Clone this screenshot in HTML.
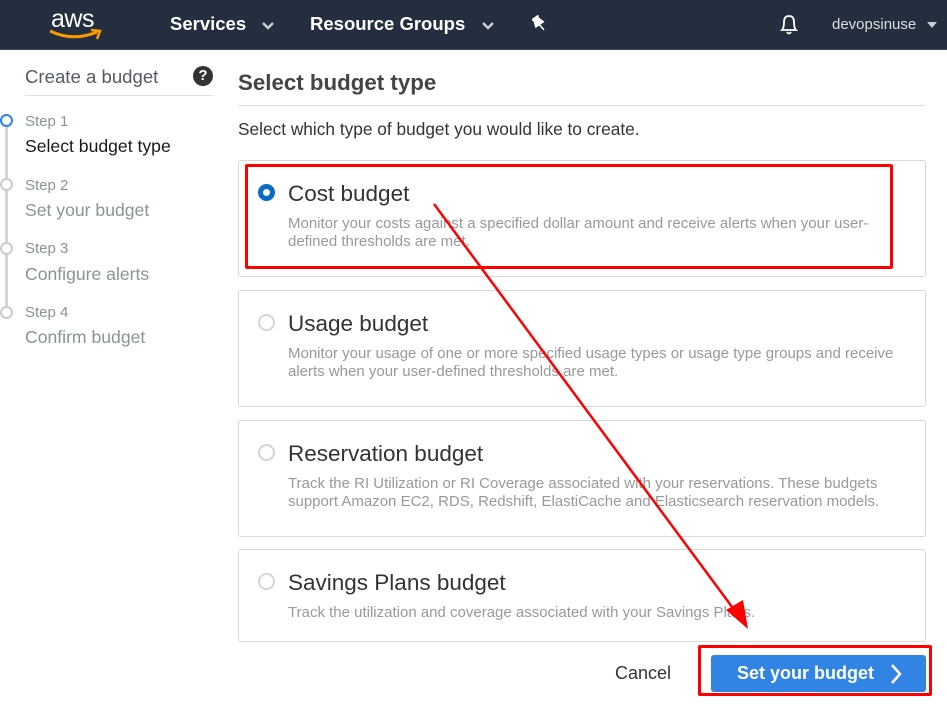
<!DOCTYPE html>
<html><head><style>
*{margin:0;padding:0;box-sizing:border-box}
body{width:947px;height:712px;position:relative;background:#fff;font-family:"Liberation Sans",Arial,sans-serif;overflow:hidden}
.hdr{position:absolute;left:0;top:0;width:947px;height:50px;background:#232f3e;border-bottom:1px solid #3c4a5c}
.hdr .t{position:absolute;top:13px;color:#fff;font-weight:bold;font-size:18.5px}
.a{position:absolute;font-size:16px}
.card{position:absolute;left:238px;width:688px;border:1px solid #d5dbdb;border-radius:3px}
.card .r{position:absolute;left:19px;top:23px;width:17px;height:17px;border:2px solid #d5d5d5;border-radius:50%}
.card .h{position:absolute;left:49px;top:20px;font-size:22.5px;color:#333}
.card .d{position:absolute;left:49px;top:54px;width:612px;font-size:15px;line-height:18px;color:#999}
.step{position:absolute;left:25px;color:#879596;font-size:15px}
.stepn{position:absolute;left:25px;font-size:17.6px;color:#879596}
.dot{position:absolute;left:0;width:13px;height:13px;border:2px solid #ccc;border-radius:50%;background:#fff}
</style></head><body>
<div class="hdr">
<div style="position:absolute;left:51px;top:5px;color:#fff;font-size:25px;letter-spacing:-0.5px">aws</div>
<svg style="position:absolute;left:47px;top:27px" width="56" height="16"><path d="M3 4 Q26 15 50 5" stroke="#f90" stroke-width="3" fill="none"/><path d="M44 3 L53 4 L50 12" stroke="#f90" stroke-width="2.5" fill="none"/></svg>
<div class="t" style="left:170px">Services</div>
<svg style="position:absolute;left:262px;top:22px" width="12" height="8"><path d="M1 1 L6 6 L11 1" stroke="#ccc" stroke-width="2.5" fill="none"/></svg>
<div class="t" style="left:310px">Resource Groups</div>
<svg style="position:absolute;left:482px;top:22px" width="12" height="8"><path d="M1 1 L6 6 L11 1" stroke="#ccc" stroke-width="2.5" fill="none"/></svg>
<svg style="position:absolute;left:532px;top:15px" width="16" height="18"><path d="M4 1 L11 1 L10 3 L12 9 L3 9 L5 3 Z M7 9 L8 16" fill="#fff" stroke="#fff" stroke-width="1.5" transform="rotate(-35 8 9)"/></svg>
<svg style="position:absolute;left:778px;top:13px" width="22" height="24"><path d="M4 17 Q6 15 6 9 Q6 3 11 3 Q16 3 16 9 Q16 15 18 17 Z M9 19 Q11 22 13 19" stroke="#fff" stroke-width="1.8" fill="none"/></svg>
<div style="position:absolute;left:832px;top:16px;color:#ddd;font-size:15px">devopsinuse</div>
<svg style="position:absolute;left:927px;top:22px" width="10" height="6"><path d="M0 0 L10 0 L5 6Z" fill="#ccc"/></svg>
</div>

<div style="position:absolute;left:25px;top:66px;font-size:18.6px;color:#545b64">Create a budget</div>
<div style="position:absolute;left:193px;top:66px;width:20px;height:20px;border-radius:50%;background:#333;color:#fff;font-weight:bold;font-size:15px;text-align:center;line-height:20px">?</div>
<div style="position:absolute;left:25px;top:95px;width:188px;height:1px;background:#e0e0e0"></div>
<div style="position:absolute;left:5px;top:120px;width:3px;height:192px;background:#d5d5d5"></div>
<div class="dot" style="top:114px;border-color:#3184e4"></div>
<div class="dot" style="top:178px"></div>
<div class="dot" style="top:242px"></div>
<div class="dot" style="top:306px"></div>
<div class="step" style="top:113px">Step 1</div><div class="stepn" style="top:136px;color:#16191f">Select budget type</div>
<div class="step" style="top:177px">Step 2</div><div class="stepn" style="top:200px">Set your budget</div>
<div class="step" style="top:240px">Step 3</div><div class="stepn" style="top:264px">Configure alerts</div>
<div class="step" style="top:304px">Step 4</div><div class="stepn" style="top:327px">Confirm budget</div>

<div style="position:absolute;left:238px;top:70px;font-size:22.3px;font-weight:bold;color:#444">Select budget type</div>
<div style="position:absolute;left:238px;top:105px;width:688px;height:1px;background:#e0e0e0"></div>
<div class="a" style="left:238px;top:119px;color:#333;font-size:17.3px">Select which type of budget you would like to create.</div>

<div class="card" style="top:160px;height:117px"><div class="r" style="border:5px solid #0a6ac7;background:#fff;left:19px;top:23px"></div><div class="h">Cost budget</div><div class="d">Monitor your costs against a specified dollar amount and receive alerts when your user-defined thresholds are met.</div></div>
<div class="card" style="top:290px;height:117px"><div class="r"></div><div class="h">Usage budget</div><div class="d">Monitor your usage of one or more specified usage types or usage type groups and receive alerts when your user-defined thresholds are met.</div></div>
<div class="card" style="top:420px;height:117px"><div class="r"></div><div class="h">Reservation budget</div><div class="d">Track the RI Utilization or RI Coverage associated with your reservations. These budgets support Amazon EC2, RDS, Redshift, ElastiCache and Elasticsearch reservation models.</div></div>
<div class="card" style="top:549px;height:93px"><div class="r"></div><div class="h">Savings Plans budget</div><div class="d">Track the utilization and coverage associated with your Savings Plans.</div></div>

<div style="position:absolute;left:245px;top:164px;width:648px;height:105px;border:3px solid #f00;border-radius:2px"></div>

<div style="position:absolute;left:615px;top:663px;font-size:18px;color:#333">Cancel</div>
<div style="position:absolute;left:698px;top:645px;width:234px;height:51px;border:3px solid #f00;border-radius:2px"></div>
<div style="position:absolute;left:711px;top:655px;width:215px;height:37px;background:#3184e4;border-radius:3px;color:#fff;font-weight:bold;font-size:18px;line-height:37px;padding-left:26px">Set your budget</div>
<svg style="position:absolute;left:889px;top:663px" width="14" height="22"><path d="M3 2 L11 11 L3 20" stroke="#fff" stroke-width="2.5" fill="none"/></svg>

<svg style="position:absolute;left:0;top:0" width="947" height="712"><line x1="434" y1="204" x2="738" y2="615" stroke="#f00" stroke-width="2.5"/><path d="M748 629 L726 610 L743 600 Z" fill="#f00"/></svg>
</body></html>
